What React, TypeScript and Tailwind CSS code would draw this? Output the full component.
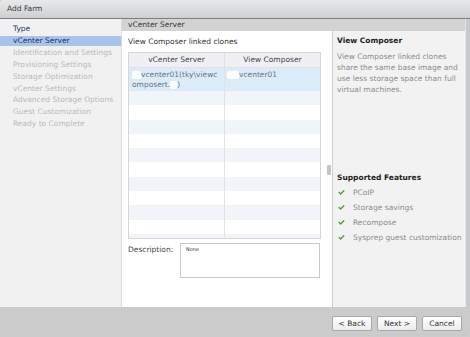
import { Check } from "lucide-react";

const steps = [
  "Identification and Settings",
  "Provisioning Settings",
  "Storage Optimization",
  "vCenter Settings",
  "Advanced Storage Options",
  "Guest Customization",
  "Ready to Complete",
];

const features = ["PCoIP", "Storage savings", "Recompose", "Sysprep guest customization"];

function Blur({ w }: { w: string }) {
  return <span className={`inline-block h-[8px] ${w} bg-white/90 rounded-[2px] align-middle blur-[0.5px]`} />;
}

function TableBody() {
  const rows = Array.from({ length: 11 });
  return (
    <div className="h-[170px] overflow-hidden">
      <div className="flex h-[23px] bg-[#dcebf8] text-[#6a7480]">
        <div className="w-[96px] border-r border-[#e2e2e2] px-[3px] pt-[2px] leading-[10px]">
          <div className="whitespace-nowrap">
            <Blur w="w-[9px]" />vcenter01(tky\viewc
          </div>
          <div className="whitespace-nowrap">
            omposert.<Blur w="w-[7px]" />)
          </div>
        </div>
        <div className="flex-1 px-[2px] pt-[2px] leading-[10px] whitespace-nowrap">
          <Blur w="w-[12px]" />vcenter01
        </div>
      </div>
      {rows.map((_, i) => (
        <div key={i} className={`flex h-[14.3px] ${i % 2 === 0 ? "bg-[#f1f4f8]" : "bg-white"}`}>
          <div className="w-[96px] border-r border-[#e2e2e2]" />
          <div className="flex-1" />
        </div>
      ))}
    </div>
  );
}

export default function App() {
  return (
    <div className="w-[470px] h-[337px] flex flex-col bg-[#cbcbcb] overflow-hidden font-['DejaVu_Sans',Verdana,sans-serif] text-[7.5px] text-[#333]">
      {/* title bar */}
      <div className="h-[19px] flex items-center pl-[7px] bg-gradient-to-b from-[#e8e9ea] to-[#cdcfd1] border-b border-[#7d7f82] rounded-tl-[3px] text-[7.5px] text-[#3a3a3a] shrink-0">
        Add Farm
      </div>

      <div className="flex h-[288px] shrink-0 pr-[4px] bg-[#c9cacb]">
        {/* steps */}
        <div className="w-[122px] bg-[#f1f1f1] border-r border-[#dcdcdc] pt-[4px] shrink-0">
          <div className="h-[12px] pl-[13px] flex items-center text-[#24386e]">Type</div>
          <div className="h-[12px] py-[1px]">
            <div className="h-[10px] pl-[13px] flex items-center bg-[#a9c4ea] text-[#1d2f5e]">vCenter Server</div>
          </div>
          {steps.map((s) => (
            <div key={s} className="h-[11.8px] pl-[13px] flex items-center text-[#bababa]">
              {s}
            </div>
          ))}
        </div>

        <div className="flex-1 flex flex-col border-r border-[#e6e6e6]">
          <div className="h-[12px] bg-[#d3d3d3] flex items-center pl-[6px] text-[#333] shrink-0">vCenter Server</div>
          <div className="flex flex-1">
            {/* main */}
            <div className="relative w-[210px] bg-white pl-[6px] pr-[11px] pt-[6px] shrink-0">
              <div className="leading-[9px] text-[#333]">View Composer linked clones</div>
              <div className="mt-[6px] border border-[#d6d6d6]">
                <div className="flex h-[15px] bg-[#eef0f3] text-[#444] border-b border-[#e2e2e2]">
                  <div className="w-[96px] border-r border-[#e0e0e0] flex items-center justify-center">vCenter Server</div>
                  <div className="flex-1 flex items-center justify-center">View Composer</div>
                </div>
                <TableBody />
              </div>
              <div className="flex mt-[4px]">
                <div className="w-[52px] pt-[1px] text-[#444]">Description:</div>
                <div className="w-[140px] h-[35px] border border-[#c8c8c8] px-[5px] pt-[2px] text-[5px] text-[#333]">
                  None
                </div>
              </div>
              <div className="absolute left-[205px] top-[134px] w-[4px] h-[10px] bg-[#c4c4c4] rounded-[1px]" />
            </div>

            {/* info */}
            <div className="flex-1 bg-[#f2f2f2] border-l border-[#cfcfcf] pl-[4px] pt-[5px]">
              <div className="font-bold text-[#222] leading-[9px]">View Composer</div>
              <div className="mt-[6px] text-[#8c8c8c] leading-[11px]">
                View Composer linked clones share the same base image and use less storage space than full virtual machines.
              </div>
              <div className="mt-[78px] font-bold text-[#222] leading-[9px]">Supported Features</div>
              <div className="mt-[3px] flex flex-col">
                {features.map((f) => (
                  <div key={f} className="h-[15px] flex items-center text-[#8c8c8c]">
                    <Check className="w-[7px] h-[7px] ml-[1px] mr-[8px] text-[#4f9a35]" strokeWidth={4.5} />
                    {f}
                  </div>
                ))}
              </div>
            </div>
          </div>
        </div>
      </div>

      {/* footer */}
      <div className="relative flex-1 flex items-start justify-end gap-[5px] pt-[9px] pr-[8px]">
        <button className="w-[40px] h-[15px] border border-[#a8a8a8] rounded-[2px] bg-gradient-to-b from-white to-[#ececec] text-[#333]">&lt; Back</button>
        <button className="w-[40px] h-[15px] border border-[#a8a8a8] rounded-[2px] bg-gradient-to-b from-white to-[#ececec] text-[#333]">Next &gt;</button>
        <button className="w-[40px] h-[15px] border border-[#a8a8a8] rounded-[2px] bg-gradient-to-b from-white to-[#ececec] text-[#333]">Cancel</button>
        <div className="absolute right-[2px] bottom-[1px] text-[5px] leading-[5px] text-[#888]">⋰</div>
      </div>
    </div>
  );
}
